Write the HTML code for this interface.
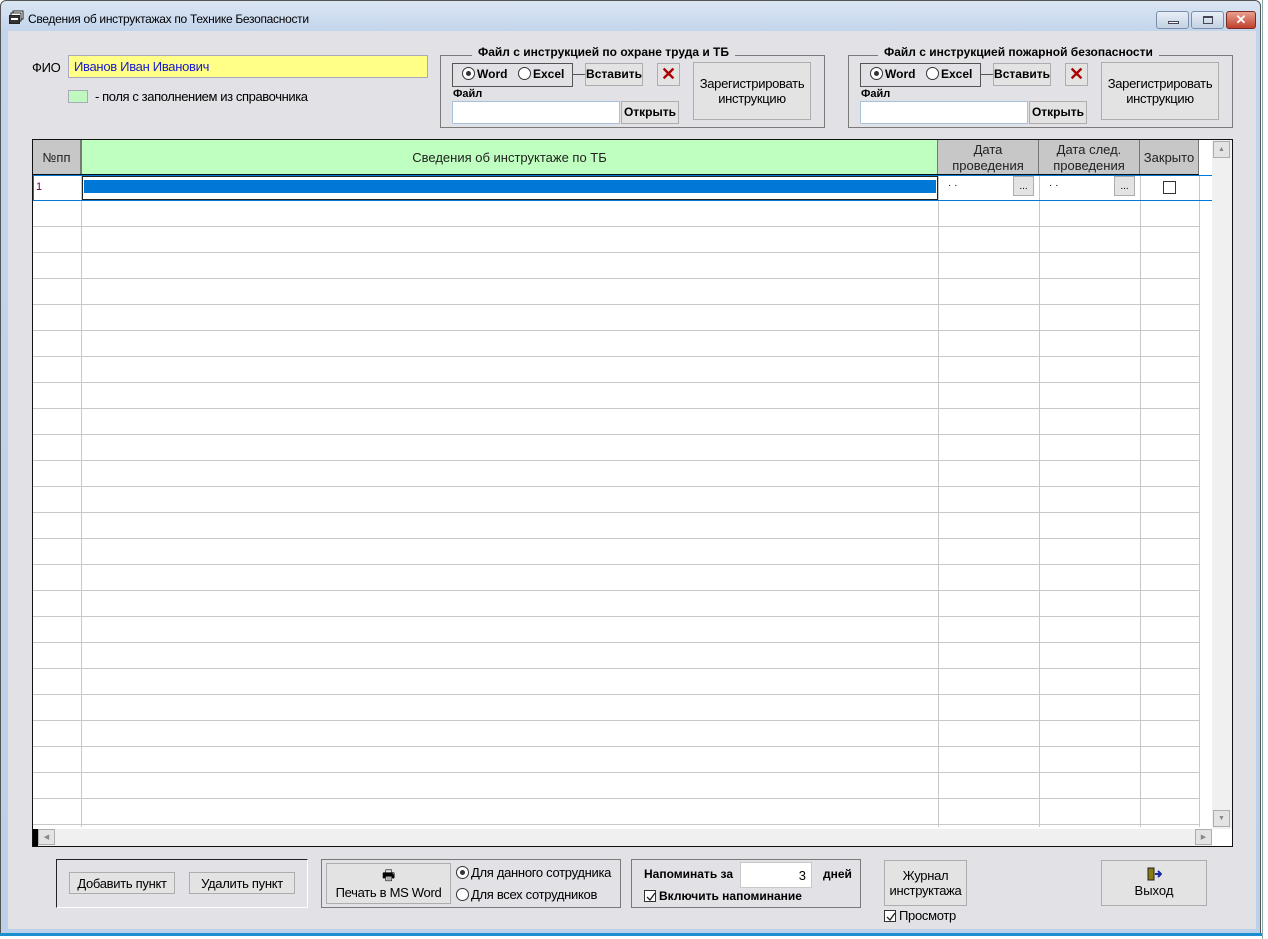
<!DOCTYPE html>
<html><head><meta charset="utf-8"><style>
*{margin:0;padding:0;box-sizing:border-box}
body{width:1268px;height:939px;overflow:hidden;background:#fff;font-family:"Liberation Sans",sans-serif;font-size:12px;color:#000;position:relative}
.a{position:absolute}
.btn{position:absolute;background:#e3e3e3;border:1px solid #adadad;display:flex;align-items:center;justify-content:center;text-align:center;line-height:15px}
.b{font-weight:bold}
.grp{position:absolute;border:1px solid #7a7a7a}
.rad{display:inline-block;width:13px;height:13px;border:1px solid #333;border-radius:50%;vertical-align:-2px;margin-right:2px;background:#fff;position:relative}
.rad.on::after{content:"";position:absolute;left:3px;top:3px;width:5px;height:5px;border-radius:50%;background:#333}
.chk{display:inline-block;width:12px;height:12px;border:1px solid #333;background:#fff;vertical-align:-2px;margin-right:3px;position:relative}
.inp{position:absolute;background:#fff;border:1px solid #a9c0de}
.vl{position:absolute;top:175px;width:1px;height:652px;background:#c8c8c8}
.hd{position:absolute;top:140px;height:35px;background:#c7c7c7;display:flex;align-items:center;justify-content:center;text-align:center;line-height:16px;color:#222;border-right:1px solid #777;font-size:13px}
</style></head><body>
<div class="a" style="left:0;top:0;width:1261px;height:934px;background:linear-gradient(#dbe6f4,#c3d5ec 30px,#bcd0e9);border:1px solid #555;border-radius:6px 6px 0 0"></div>
<div class="a" style="left:1262px;top:0;width:6px;height:939px;background:#fff;border-left:1px solid #8aa"></div>
<div class="a" style="left:0;top:933px;width:1262px;height:3px;background:#1a8fd0"></div>
<div class="a" style="left:8px;top:31px;width:1248px;height:898px;background:#e1e1e6"></div>
<div class="a" style="left:9px;top:10px;width:16px;height:14px">
<svg width="16" height="14"><rect x="4" y="1" width="10" height="8" fill="#fff" stroke="#222"/><rect x="2" y="3" width="10" height="8" fill="#fff" stroke="#222"/><rect x="0.5" y="5.5" width="10" height="8" fill="#333" stroke="#222"/><rect x="2" y="8" width="7" height="2" fill="#fff"/></svg></div>
<div class="a" style="left:28px;top:12px;font-size:12px;letter-spacing:-0.3px">Сведения об инструктажах по Технике Безопасности</div>
<div class="a" style="left:1156px;top:11px;width:33px;height:18px;border:1px solid #7b8ea8;border-radius:3px;background:linear-gradient(#e8eef6,#c3d1e3)"><div class="a" style="left:11px;top:9px;width:11px;height:3px;background:#fff;border:1px solid #445"></div></div>
<div class="a" style="left:1191px;top:11px;width:33px;height:18px;border:1px solid #7b8ea8;border-radius:3px;background:linear-gradient(#e8eef6,#c3d1e3)"><div class="a" style="left:11px;top:4px;width:10px;height:8px;border:1px solid #445;border-top-width:2px"></div></div>
<div class="a" style="left:1226px;top:11px;width:30px;height:18px;border:1px solid #7a2a20;border-radius:3px;background:linear-gradient(#e8a090,#c0402c);color:#fff;font-weight:bold;font-size:13px;text-align:center;line-height:15px">✕</div>
<div class="a" style="left:32px;top:60px;font-size:13px;letter-spacing:-0.3px">ФИО</div>
<div class="a" style="left:68px;top:55px;width:360px;height:23px;background:#ffff88;border:1px solid #a9a9b9;color:#1a1ad0;padding:3px 5px;font-size:13px;letter-spacing:-0.3px">Иванов Иван Иванович</div>
<div class="a" style="left:68px;top:90px;width:20px;height:13px;background:#bff9bf;border:1px solid #a9a9b9"></div>
<div class="a" style="left:95px;top:89px;font-size:13px;letter-spacing:-0.4px">- поля с заполнением из справочника</div>

<div class="grp" style="left:440px;top:55px;width:385px;height:73px"></div>
<div class="a b" style="left:472px;top:45px;background:#e1e1e6;padding:0 6px">Файл с инструкцией по охране труда и ТБ</div>
<div class="grp" style="left:452px;top:63px;width:121px;height:24px;border-color:#555"></div>
<div class="a b" style="left:462px;top:67px"><span class="rad on"></span>Word</div>
<div class="a b" style="left:518px;top:67px"><span class="rad"></span>Excel</div>
<div class="a" style="left:573px;top:74px;width:13px;height:1px;background:#555"></div>
<div class="btn b" style="left:585px;top:63px;width:58px;height:23px">Вставить</div>
<div class="btn" style="left:657px;top:63px;width:23px;height:23px;color:#a00;font-size:18px;font-weight:bold">✕</div>
<div class="btn" style="left:693px;top:62px;width:118px;height:58px;font-size:13px;letter-spacing:-0.3px">Зарегистрировать<br>инструкцию</div>
<div class="a b" style="left:453px;top:88px;font-size:11px">Файл</div>
<div class="inp" style="left:452px;top:101px;width:168px;height:23px"></div>
<div class="btn b" style="left:621px;top:101px;width:58px;height:23px">Открыть</div>

<div class="grp" style="left:848px;top:55px;width:385px;height:73px"></div>
<div class="a b" style="left:878px;top:45px;background:#e1e1e6;padding:0 6px">Файл с инструкцией пожарной безопасности</div>
<div class="grp" style="left:860px;top:63px;width:121px;height:24px;border-color:#555"></div>
<div class="a b" style="left:870px;top:67px"><span class="rad on"></span>Word</div>
<div class="a b" style="left:926px;top:67px"><span class="rad"></span>Excel</div>
<div class="a" style="left:981px;top:74px;width:13px;height:1px;background:#555"></div>
<div class="btn b" style="left:993px;top:63px;width:58px;height:23px">Вставить</div>
<div class="btn" style="left:1065px;top:63px;width:23px;height:23px;color:#a00;font-size:18px;font-weight:bold">✕</div>
<div class="btn" style="left:1101px;top:62px;width:118px;height:58px;font-size:13px;letter-spacing:-0.3px">Зарегистрировать<br>инструкцию</div>
<div class="a b" style="left:861px;top:88px;font-size:11px">Файл</div>
<div class="inp" style="left:860px;top:101px;width:168px;height:23px"></div>
<div class="btn b" style="left:1029px;top:101px;width:58px;height:23px">Открыть</div>

<div class="a" style="left:32px;top:139px;width:1201px;height:708px;border:1px solid #111;background:#fff"></div>
<div class="a" style="left:33px;top:175px;width:1166px;height:652px;background:repeating-linear-gradient(to bottom,transparent 0,transparent 25px,#c8c8c8 25px,#c8c8c8 26px)"></div>
<div class="hd" style="left:33px;width:48px">№пп</div>
<div class="hd" style="left:81px;width:857px;background:#bfffbf;border-left:1px solid #777">Сведения об инструктаже по ТБ</div>
<div class="hd" style="left:938px;width:101px">Дата<br>проведения</div>
<div class="hd" style="left:1039px;width:101px">Дата след.<br>проведения</div>
<div class="hd" style="left:1140px;width:59px">Закрыто</div>
<div class="a" style="left:33px;top:174px;width:1166px;height:1px;background:#111"></div>
<div class="vl" style="left:81px"></div><div class="vl" style="left:938px"></div><div class="vl" style="left:1039px"></div><div class="vl" style="left:1140px"></div><div class="vl" style="left:1199px"></div>
<div class="a" style="left:33px;top:175px;width:1180px;height:26px;border:1px solid #0078d7"></div>
<div class="a" style="left:36px;top:181px;color:#600060;font-size:11px">1</div>
<div class="a" style="left:82px;top:176px;width:856px;height:24px;background:#fff;border:1px solid #222"><div class="a" style="left:1px;top:3px;width:852px;height:13px;background:#0078d7"></div></div>
<div class="a" style="left:948px;top:180px;font-size:10px">· ·</div>
<div class="btn" style="left:1013px;top:176px;width:21px;height:20px;font-size:10px">...</div>
<div class="a" style="left:1049px;top:180px;font-size:10px">· ·</div>
<div class="btn" style="left:1114px;top:176px;width:21px;height:20px;font-size:10px">...</div>
<div class="a" style="left:1163px;top:181px;width:13px;height:13px;border:1px solid #333;background:#fff"></div>
<div class="a" style="left:1212px;top:140px;width:20px;height:689px;background:#f0f0f0"></div>
<div class="btn" style="left:1213px;top:141px;width:17px;height:17px;font-size:7px;color:#888">▲</div>
<div class="btn" style="left:1213px;top:810px;width:17px;height:17px;font-size:7px;color:#888">▼</div>
<div class="a" style="left:33px;top:829px;width:1179px;height:17px;background:#f0f0f0"></div>
<div class="a" style="left:33px;top:829px;width:5px;height:17px;background:#000"></div>
<div class="btn" style="left:38px;top:829px;width:17px;height:16px;font-size:7px;color:#888">◀</div>
<div class="btn" style="left:1195px;top:829px;width:17px;height:16px;font-size:7px;color:#888">▶</div>

<div class="a" style="left:56px;top:859px;width:252px;height:49px;border-top:1px solid #222;border-left:1px solid #222;border-right:1px solid #fff;border-bottom:1px solid #fff"></div>
<div class="btn" style="left:69px;top:872px;width:106px;height:22px;font-size:13px;letter-spacing:-0.3px">Добавить пункт</div>
<div class="btn" style="left:189px;top:872px;width:106px;height:22px;font-size:13px;letter-spacing:-0.3px">Удалить пункт</div>
<div class="grp" style="left:321px;top:859px;width:300px;height:49px"></div>
<div class="btn" style="left:326px;top:863px;width:125px;height:41px;flex-direction:column;line-height:17px;font-size:13px;letter-spacing:-0.3px"><span style="font-size:14px">🖶</span>Печать в MS Word</div>
<div class="a" style="left:456px;top:862px;line-height:22px;font-size:13px;letter-spacing:-0.3px"><span class="rad on"></span>Для данного сотрудника<br><span class="rad"></span>Для всех сотрудников</div>
<div class="grp" style="left:631px;top:859px;width:230px;height:49px"></div>
<div class="a b" style="left:644px;top:867px">Напоминать за</div>
<div class="inp" style="left:740px;top:862px;width:72px;height:26px;border-color:#c8c8c8;text-align:right;padding:5px 5px;font-size:13px">3</div>
<div class="a b" style="left:823px;top:867px">дней</div>
<div class="a b" style="left:644px;top:889px"><span class="chk"><svg class="a" style="left:1px;top:1px" width="10" height="10"><path d="M1 5 L4 8 L9 1" stroke="#222" fill="none" stroke-width="1.3"/></svg></span>Включить напоминание</div>
<div class="btn" style="left:884px;top:860px;width:83px;height:46px;font-size:13px;letter-spacing:-0.3px">Журнал<br>инструктажа</div>
<div class="a" style="left:884px;top:908px;font-size:13px;letter-spacing:-0.3px"><span class="chk"><svg class="a" style="left:1px;top:1px" width="10" height="10"><path d="M1 5 L4 8 L9 1" stroke="#222" fill="none" stroke-width="1.3"/></svg></span>Просмотр</div>
<div class="btn" style="left:1101px;top:860px;width:106px;height:46px;flex-direction:column;line-height:18px;font-size:13px">
<svg width="16" height="16"><rect x="2" y="2" width="6" height="12" fill="#8a7a10" stroke="#222"/><path d="M9 8 H15 M12 5 L15 8 L12 11" stroke="#1a2aa0" stroke-width="2" fill="none"/></svg>Выход</div>
</body></html>
